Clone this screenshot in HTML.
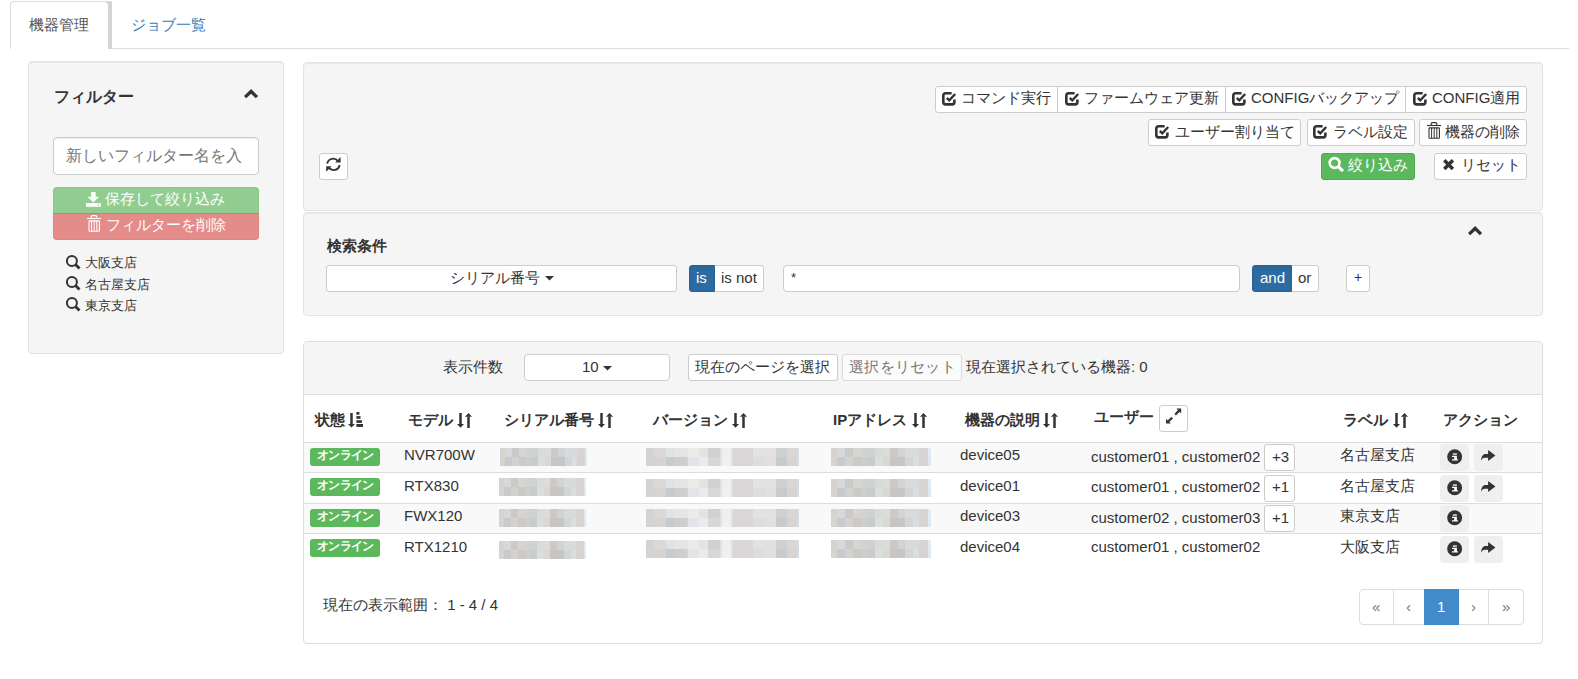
<!DOCTYPE html>
<html><head><meta charset="utf-8">
<style>
*{box-sizing:border-box}
html,body{margin:0;padding:0;background:#fff;width:1578px;height:679px;overflow:hidden}
body{font-family:"Liberation Sans",sans-serif;font-size:15px;color:#333;position:relative}
.a{position:absolute}
.t{position:absolute;white-space:nowrap;line-height:20px}
.well{position:absolute;background:#f5f5f5;border:1px solid #e3e3e3;border-radius:4px;box-shadow:inset 0 1px 1px rgba(0,0,0,.05)}
.btn{position:absolute;background:#fff;border:1px solid #ccc;border-radius:3px;white-space:nowrap;line-height:20px;color:#333}
svg{position:absolute;overflow:visible}
.bold{font-weight:bold}
</style></head><body>

<!-- tabs -->
<div class="a" style="left:112px;top:48px;width:1457px;height:1px;background:#ddd"></div>
<div class="a" style="left:10px;top:1px;width:102px;height:48px;background:#d4d4d4;border-top:1px solid #ddd;border-left:1px solid #ddd;border-top-left-radius:4px"></div><div class="a" style="left:11px;top:2px;width:97px;height:47px;background:#fff;border-radius:3px 4px 0 0"></div>
<div class="t" style="left:29px;top:15px;color:#555">機器管理</div>
<div class="t" style="left:131px;top:15px;color:#337ab7">ジョブ一覧</div>

<!-- left well -->
<div class="well" style="left:28px;top:61px;width:256px;height:293px"></div>
<div class="t bold" style="left:54px;top:87px;font-size:16px">フィルター</div>
<svg style="left:244px;top:89px" width="15" height="11"><polygon points="0,7.1 7.1,0 14.1,7.1 11.8,9.3 7.1,4.8 2.2,9.3" fill="#333"/></svg>
<div class="a" style="left:53px;top:137px;width:206px;height:38px;background:#fff;border:1px solid #ccc;border-radius:4px;box-shadow:inset 0 1px 1px rgba(0,0,0,.075)"></div>
<div class="t" style="left:66px;top:146px;font-size:16px;color:#777;width:180px;overflow:hidden">新しいフィルター名を入</div>
<div class="a" style="left:53px;top:187px;width:206px;height:26px;background:#91cd91;border:1px solid #88c888;border-bottom:0;border-radius:4px 4px 0 0"></div>
<div class="a" style="left:53px;top:213px;width:206px;height:27px;background:#e38c89;border:1px solid #df8581;border-top:0;border-radius:0 0 4px 4px"></div><div class="a" style="left:53px;top:213px;width:206px;height:1px;background:#d47c72"></div>
<svg style="left:86px;top:192px" width="15" height="15"><path d="M5.2 0 H9.6 V4.8 H13 L7.4 10.4 L1.5 4.8 H5.2 Z" fill="#fff"/><path d="M0 11.1 H14.8 V14.8 H0 Z" fill="#fff"/><rect x="11.5" y="12.3" width="1.5" height="1.2" fill="#91cd91"/></svg>
<div class="t" style="left:105px;top:189px;color:#fff">保存して絞り込み</div>
<svg style="left:87px;top:215px" width="15" height="17"><path d="M0 3.5 H14" stroke="#fff" stroke-width="1.1"/><path d="M4.2 3 V1.6 Q4.2 0.6 5.2 0.6 H8.8 Q9.8 0.6 9.8 1.6 V3.5" stroke="#fff" stroke-width="1.1" fill="none"/><rect x="2" y="5.9" width="10.4" height="10.4" rx="0.8" stroke="#fff" stroke-width="1.1" fill="none"/><path d="M4.6 6 V16 M7.2 6 V16 M9.8 6 V16" stroke="#fff" stroke-width="1"/></svg>
<div class="t" style="left:106px;top:215px;color:#fff">フィルターを削除</div>

<svg style="left:65px;top:254px" width="16" height="16"><circle cx="6.9" cy="6.9" r="5" fill="none" stroke="#333" stroke-width="2"/><path d="M10.5 10.5 L14.5 14.5" stroke="#333" stroke-width="2.8"/></svg>
<div class="t" style="left:85px;top:253px;font-size:13px">大阪支店</div>
<svg style="left:65px;top:275px" width="16" height="16"><circle cx="6.9" cy="6.9" r="5" fill="none" stroke="#333" stroke-width="2"/><path d="M10.5 10.5 L14.5 14.5" stroke="#333" stroke-width="2.8"/></svg>
<div class="t" style="left:85px;top:275px;font-size:13px">名古屋支店</div>
<svg style="left:65px;top:296px" width="16" height="16"><circle cx="6.9" cy="6.9" r="5" fill="none" stroke="#333" stroke-width="2"/><path d="M10.5 10.5 L14.5 14.5" stroke="#333" stroke-width="2.8"/></svg>
<div class="t" style="left:85px;top:296px;font-size:13px">東京支店</div>

<!-- top-right well -->
<div class="well" style="left:303px;top:62px;width:1240px;height:149px"></div>
<div class="btn" style="left:935px;top:86px;width:123px;height:27px;border-radius:3px 0 0 3px"></div>
<div class="btn" style="left:1057px;top:86px;width:169px;height:27px;border-radius:0"></div>
<div class="btn" style="left:1225px;top:86px;width:181px;height:27px;border-radius:0"></div>
<div class="btn" style="left:1405px;top:86px;width:122px;height:27px;border-radius:0 3px 3px 0"></div>
<svg style="left:942px;top:92px" width="15" height="14"><path d="M9.6 1.3 H3.6 Q1.3 1.3 1.3 3.6 V10.1 Q1.3 12.4 3.6 12.4 H10.1 Q12.4 12.4 12.4 10.1 V7.4" stroke="#333" stroke-width="2.6" fill="none"/><path d="M4.8 6 L7.3 8.3 L13.2 2" stroke="#333" stroke-width="2.4" fill="none"/></svg>
<div class="t" style="left:961px;top:88px">コマンド実行</div>
<svg style="left:1065px;top:92px" width="15" height="14"><path d="M9.6 1.3 H3.6 Q1.3 1.3 1.3 3.6 V10.1 Q1.3 12.4 3.6 12.4 H10.1 Q12.4 12.4 12.4 10.1 V7.4" stroke="#333" stroke-width="2.6" fill="none"/><path d="M4.8 6 L7.3 8.3 L13.2 2" stroke="#333" stroke-width="2.4" fill="none"/></svg>
<div class="t" style="left:1084px;top:88px">ファームウェア更新</div>
<svg style="left:1232px;top:92px" width="15" height="14"><path d="M9.6 1.3 H3.6 Q1.3 1.3 1.3 3.6 V10.1 Q1.3 12.4 3.6 12.4 H10.1 Q12.4 12.4 12.4 10.1 V7.4" stroke="#333" stroke-width="2.6" fill="none"/><path d="M4.8 6 L7.3 8.3 L13.2 2" stroke="#333" stroke-width="2.4" fill="none"/></svg>
<div class="t" style="left:1251px;top:88px">CONFIGバックアップ</div>
<svg style="left:1413px;top:92px" width="15" height="14"><path d="M9.6 1.3 H3.6 Q1.3 1.3 1.3 3.6 V10.1 Q1.3 12.4 3.6 12.4 H10.1 Q12.4 12.4 12.4 10.1 V7.4" stroke="#333" stroke-width="2.6" fill="none"/><path d="M4.8 6 L7.3 8.3 L13.2 2" stroke="#333" stroke-width="2.4" fill="none"/></svg>
<div class="t" style="left:1432px;top:88px">CONFIG適用</div>
<div class="btn" style="left:1148px;top:119px;width:153px;height:27px"></div>
<div class="btn" style="left:1307px;top:119px;width:108px;height:27px"></div>
<div class="btn" style="left:1419px;top:119px;width:108px;height:27px"></div>
<svg style="left:1155px;top:125px" width="15" height="14"><path d="M9.6 1.3 H3.6 Q1.3 1.3 1.3 3.6 V10.1 Q1.3 12.4 3.6 12.4 H10.1 Q12.4 12.4 12.4 10.1 V7.4" stroke="#333" stroke-width="2.6" fill="none"/><path d="M4.8 6 L7.3 8.3 L13.2 2" stroke="#333" stroke-width="2.4" fill="none"/></svg>
<div class="t" style="left:1175px;top:122px">ユーザー割り当て</div>
<svg style="left:1313px;top:125px" width="15" height="14"><path d="M9.6 1.3 H3.6 Q1.3 1.3 1.3 3.6 V10.1 Q1.3 12.4 3.6 12.4 H10.1 Q12.4 12.4 12.4 10.1 V7.4" stroke="#333" stroke-width="2.6" fill="none"/><path d="M4.8 6 L7.3 8.3 L13.2 2" stroke="#333" stroke-width="2.4" fill="none"/></svg>
<div class="t" style="left:1333px;top:122px">ラベル設定</div>
<svg style="left:1427px;top:122px" width="15" height="17"><path d="M0 3.5 H14" stroke="#333" stroke-width="1.1"/><path d="M4.2 3 V1.6 Q4.2 0.6 5.2 0.6 H8.8 Q9.8 0.6 9.8 1.6 V3.5" stroke="#333" stroke-width="1.1" fill="none"/><rect x="2" y="5.9" width="10.4" height="10.4" rx="0.8" stroke="#333" stroke-width="1.1" fill="none"/><path d="M4.6 6 V16 M7.2 6 V16 M9.8 6 V16" stroke="#333" stroke-width="1"/></svg>
<div class="t" style="left:1445px;top:122px">機器の削除</div>
<div class="btn" style="left:1321px;top:153px;width:94px;height:27px;background:#5cb85c;border-color:#4cae4c"></div>
<svg style="left:1328px;top:157px" width="17" height="16"><circle cx="6.6" cy="6" r="4.9" fill="none" stroke="#fff" stroke-width="2.6"/><path d="M10.3 9.6 L15 14.2" stroke="#fff" stroke-width="3.2"/></svg>
<div class="t" style="left:1348px;top:155px;color:#fff">絞り込み</div>
<div class="btn" style="left:1434px;top:153px;width:93px;height:27px"></div>
<svg style="left:1443px;top:159px" width="12" height="12"><path d="M1.3 1.3 L9.9 9.9 M9.9 1.3 L1.3 9.9" stroke="#333" stroke-width="3.5"/></svg>
<div class="t" style="left:1461px;top:155px">リセット</div>
<div class="btn" style="left:319px;top:153px;width:29px;height:27px"></div>
<svg style="left:326px;top:157px" width="15" height="15"><path d="M1.2 6.6 A6 6 0 0 1 12 4.2" fill="none" stroke="#333" stroke-width="1.9"/><path d="M14.6 0 V5.6 H9.2 Z" fill="#333"/><path d="M13.6 8 A6 6 0 0 1 2.8 10.6" fill="none" stroke="#333" stroke-width="1.9"/><path d="M0.2 14.8 V9.2 H5.6 Z" fill="#333"/></svg>
<div class="well" style="left:303px;top:212px;width:1240px;height:104px"></div>
<div class="t bold" style="left:327px;top:236px">検索条件</div>
<svg style="left:1468px;top:226px" width="15" height="11"><polygon points="0,7.1 7.1,0 14.1,7.1 11.8,9.3 7.1,4.8 2.2,9.3" fill="#333"/></svg>
<div class="btn" style="left:326px;top:265px;width:351px;height:27px"></div>
<div class="t" style="left:450px;top:268px">シリアル番号</div>
<svg style="left:545px;top:276px" width="9" height="5"><path d="M0 0 H9 L4.5 4.5 Z" fill="#333"/></svg>
<div class="btn" style="left:689px;top:265px;width:26px;height:27px;background:#2d6ca2;border-color:#28619a;border-radius:3px 0 0 3px;box-shadow:inset 0 2px 4px rgba(0,0,0,.08)"></div>
<div class="t" style="left:696px;top:268px;color:#fff">is</div>
<div class="btn" style="left:715px;top:265px;width:49px;height:27px;border-radius:0 3px 3px 0;border-left:0"></div>
<div class="t" style="left:721px;top:268px">is not</div>
<div class="btn" style="left:783px;top:265px;width:457px;height:27px;border-radius:4px"></div>
<div class="t" style="left:791px;top:268px;font-size:13px">*</div>
<div class="btn" style="left:1252px;top:265px;width:40px;height:27px;background:#2d6ca2;border-color:#28619a;border-radius:3px 0 0 3px;box-shadow:inset 0 2px 4px rgba(0,0,0,.08)"></div>
<div class="t" style="left:1260px;top:268px;color:#fff">and</div>
<div class="btn" style="left:1292px;top:265px;width:27px;height:27px;border-radius:0 3px 3px 0;border-left:0"></div>
<div class="t" style="left:1298px;top:268px">or</div>
<div class="btn" style="left:1346px;top:265px;width:24px;height:27px"></div>
<div class="t" style="left:1354px;top:267px;font-size:14px">+</div>
<div class="a" style="left:303px;top:341px;width:1240px;height:303px;background:#fff;border:1px solid #ddd;border-radius:4px;overflow:hidden"><div style="position:absolute;left:0;top:0;width:100%;height:53px;background:#f5f5f5;border-bottom:1px solid #ddd"></div></div>
<div class="t" style="left:443px;top:357px">表示件数</div>
<div class="btn" style="left:524px;top:354px;width:146px;height:27px;border-radius:4px"></div>
<div class="t" style="left:582px;top:357px">10</div>
<svg style="left:603px;top:366px" width="9" height="5"><path d="M0 0 H9 L4.5 4.5 Z" fill="#333"/></svg>
<div class="btn" style="left:688px;top:354px;width:150px;height:27px"></div>
<div class="t" style="left:695px;top:357px">現在のページを選択</div>
<div class="btn" style="left:842px;top:354px;width:120px;height:27px;opacity:.65"></div>
<div class="t" style="left:849px;top:357px;color:#777;letter-spacing:0.3px">選択をリセット</div>
<div class="t" style="left:966px;top:357px">現在選択されている機器: 0</div>
<div class="t bold" style="left:315px;top:410px">状態</div>
<svg style="left:348px;top:412px" width="16" height="16"><path d="M3.5 1 V12.5" stroke="#333" stroke-width="2.5"/><path d="M0 12 H7 L3.5 15.5 Z" fill="#333"/><rect x="8.4" y="0" width="3" height="2.7" fill="#333"/><rect x="8.4" y="4.1" width="4.1" height="2.7" fill="#333"/><rect x="8.4" y="8.2" width="5.5" height="2.7" fill="#333"/><rect x="8.4" y="12" width="6.6" height="2.9" fill="#333"/></svg>
<div class="t bold" style="left:408px;top:410px">モデル</div>
<svg style="left:457px;top:413px" width="16" height="16"><path d="M3.5 0 V11.5" stroke="#333" stroke-width="2.5"/><path d="M0 11 H7 L3.5 14.8 Z" fill="#333"/><path d="M11.5 15 V3.5" stroke="#333" stroke-width="2.5"/><path d="M8 3.8 H15 L11.5 0 Z" fill="#333"/></svg>
<div class="t bold" style="left:504px;top:410px">シリアル番号</div>
<svg style="left:598px;top:413px" width="16" height="16"><path d="M3.5 0 V11.5" stroke="#333" stroke-width="2.5"/><path d="M0 11 H7 L3.5 14.8 Z" fill="#333"/><path d="M11.5 15 V3.5" stroke="#333" stroke-width="2.5"/><path d="M8 3.8 H15 L11.5 0 Z" fill="#333"/></svg>
<div class="t bold" style="left:653px;top:410px">バージョン</div>
<svg style="left:732px;top:413px" width="16" height="16"><path d="M3.5 0 V11.5" stroke="#333" stroke-width="2.5"/><path d="M0 11 H7 L3.5 14.8 Z" fill="#333"/><path d="M11.5 15 V3.5" stroke="#333" stroke-width="2.5"/><path d="M8 3.8 H15 L11.5 0 Z" fill="#333"/></svg>
<div class="t bold" style="left:833px;top:410px">IPアドレス</div>
<svg style="left:912px;top:413px" width="16" height="16"><path d="M3.5 0 V11.5" stroke="#333" stroke-width="2.5"/><path d="M0 11 H7 L3.5 14.8 Z" fill="#333"/><path d="M11.5 15 V3.5" stroke="#333" stroke-width="2.5"/><path d="M8 3.8 H15 L11.5 0 Z" fill="#333"/></svg>
<div class="t bold" style="left:965px;top:410px">機器の説明</div>
<svg style="left:1043px;top:413px" width="16" height="16"><path d="M3.5 0 V11.5" stroke="#333" stroke-width="2.5"/><path d="M0 11 H7 L3.5 14.8 Z" fill="#333"/><path d="M11.5 15 V3.5" stroke="#333" stroke-width="2.5"/><path d="M8 3.8 H15 L11.5 0 Z" fill="#333"/></svg>
<div class="t bold" style="left:1343px;top:410px">ラベル</div>
<svg style="left:1393px;top:413px" width="16" height="16"><path d="M3.5 0 V11.5" stroke="#333" stroke-width="2.5"/><path d="M0 11 H7 L3.5 14.8 Z" fill="#333"/><path d="M11.5 15 V3.5" stroke="#333" stroke-width="2.5"/><path d="M8 3.8 H15 L11.5 0 Z" fill="#333"/></svg>
<div class="t bold" style="left:1443px;top:410px">アクション</div>
<div class="t bold" style="left:1094px;top:407px">ユーザー</div>
<div class="btn" style="left:1159px;top:405px;width:29px;height:27px"></div>
<svg style="left:1165px;top:408px" width="17" height="17"><path d="M10.2 6.6 L14.4 2.4" stroke="#333" stroke-width="2.2"/><path d="M16.2 0.6 V5.4 L11.4 0.6 Z" fill="#333"/><path d="M7.2 9.6 L3 13.8" stroke="#333" stroke-width="2.2"/><path d="M1 15.6 V10.8 L5.8 15.6 Z" fill="#333"/></svg>
<div class="a" style="left:304px;top:442px;width:1238px;height:1px;background:#ddd"></div>
<div class="a" style="left:304px;top:443px;width:1238px;height:29px;background:#f9f9f9"></div>
<div class="a" style="left:304px;top:472px;width:1238px;height:1px;background:#ddd"></div>
<div class="a" style="left:304px;top:473px;width:1238px;height:30px;background:#fff"></div>
<div class="a" style="left:304px;top:503px;width:1238px;height:1px;background:#ddd"></div>
<div class="a" style="left:304px;top:504px;width:1238px;height:29px;background:#f9f9f9"></div>
<div class="a" style="left:304px;top:533px;width:1238px;height:1px;background:#ddd"></div>
<div class="a" style="left:304px;top:534px;width:1238px;height:30px;background:#fff"></div>
<div class="a" style="left:310px;top:448px;width:70px;height:18px;background:#5cb85c;border-radius:3px"></div>
<div class="t bold" style="left:317px;top:445px;font-size:12px;letter-spacing:-0.7px;color:#fff">オンライン</div>
<div class="t" style="left:404px;top:445px">NVR700W</div>
<svg style="left:500px;top:448px" width="87" height="18" shape-rendering="crispEdges"><rect x="0.00" y="0" width="5.36" height="8.5" fill="#d6d3ce"/><rect x="0.00" y="8.5" width="5.36" height="9.5" fill="#d5d4ce"/><rect x="5.31" y="0" width="6.93" height="8.5" fill="#d5d9da"/><rect x="5.31" y="8.5" width="6.93" height="9.5" fill="#c9cacb"/><rect x="12.19" y="0" width="7.19" height="8.5" fill="#c9cacc"/><rect x="12.19" y="8.5" width="7.19" height="9.5" fill="#d4d2ce"/><rect x="19.33" y="0" width="6.67" height="8.5" fill="#d8d4d2"/><rect x="19.33" y="8.5" width="6.67" height="9.5" fill="#cdc9c7"/><rect x="25.95" y="0" width="5.54" height="8.5" fill="#d0d3d3"/><rect x="25.95" y="8.5" width="5.54" height="9.5" fill="#cccfce"/><rect x="31.44" y="0" width="7.02" height="8.5" fill="#cfd1d3"/><rect x="31.44" y="8.5" width="7.02" height="9.5" fill="#cbcbce"/><rect x="38.41" y="0" width="6.76" height="8.5" fill="#d8dbdb"/><rect x="38.41" y="8.5" width="6.76" height="9.5" fill="#dcdedd"/><rect x="45.11" y="0" width="6.41" height="8.5" fill="#dcdcd8"/><rect x="45.11" y="8.5" width="6.41" height="9.5" fill="#d8d8d6"/><rect x="51.47" y="0" width="6.76" height="8.5" fill="#cec9c8"/><rect x="51.47" y="8.5" width="6.76" height="9.5" fill="#c9c5c2"/><rect x="58.17" y="0" width="6.41" height="8.5" fill="#d2d3d6"/><rect x="58.17" y="8.5" width="6.41" height="9.5" fill="#c4c6ca"/><rect x="64.53" y="0" width="7.02" height="8.5" fill="#d9dbda"/><rect x="64.53" y="8.5" width="7.02" height="9.5" fill="#d4d6d5"/><rect x="71.50" y="0" width="5.19" height="8.5" fill="#d9dbda"/><rect x="71.50" y="8.5" width="5.19" height="9.5" fill="#dcdde0"/><rect x="76.64" y="0" width="7.97" height="8.5" fill="#d9d4d3"/><rect x="76.64" y="8.5" width="7.97" height="9.5" fill="#d7d3d1"/><rect x="84.56" y="0" width="2.49" height="8.5" fill="#e4eaf3"/><rect x="84.56" y="8.5" width="2.49" height="9.5" fill="#dde9f0"/></svg>
<svg style="left:646px;top:448px" width="153" height="18" shape-rendering="crispEdges"><rect x="0" y="0" width="8" height="8.5" fill="#d4d3d1"/><rect x="8" y="0" width="12" height="8.5" fill="#dad8d8"/><rect x="20" y="0" width="9" height="8.5" fill="#e0e2e4"/><rect x="29" y="0" width="13" height="8.5" fill="#e5e5e3"/><rect x="42" y="0" width="11" height="8.5" fill="#ebebea"/><rect x="53" y="0" width="9" height="8.5" fill="#e4e2e2"/><rect x="62" y="0" width="12" height="8.5" fill="#d0d1d3"/><rect x="74" y="0" width="2" height="8.5" fill="#e0e2e3"/><rect x="76" y="0" width="9" height="8.5" fill="#eef0ef"/><rect x="85" y="0" width="2" height="8.5" fill="#e0e0e0"/><rect x="87" y="0" width="20" height="8.5" fill="#dad8d6"/><rect x="107" y="0" width="12" height="8.5" fill="#e1e2e3"/><rect x="119" y="0" width="11" height="8.5" fill="#e2e1df"/><rect x="130" y="0" width="11" height="8.5" fill="#cdd1d2"/><rect x="141" y="0" width="10" height="8.5" fill="#d9d6d4"/><rect x="151" y="0" width="2" height="8.5" fill="#d8dbe0"/><rect x="0" y="8.5" width="8" height="9.5" fill="#d3d3d1"/><rect x="8" y="8.5" width="12" height="9.5" fill="#d7d3d1"/><rect x="20" y="8.5" width="9" height="9.5" fill="#c8cacd"/><rect x="29" y="8.5" width="11" height="9.5" fill="#cecfca"/><rect x="40" y="8.5" width="2" height="9.5" fill="#d3d3d3"/><rect x="42" y="8.5" width="11" height="9.5" fill="#e1e4e8"/><rect x="53" y="8.5" width="9" height="9.5" fill="#ecebec"/><rect x="62" y="8.5" width="12" height="9.5" fill="#d6d7d8"/><rect x="74" y="8.5" width="2" height="9.5" fill="#e0e2e3"/><rect x="76" y="8.5" width="9" height="9.5" fill="#eff1f0"/><rect x="85" y="8.5" width="2" height="9.5" fill="#e0e0e0"/><rect x="87" y="8.5" width="20" height="9.5" fill="#d8d6d6"/><rect x="107" y="8.5" width="12" height="9.5" fill="#dcdddf"/><rect x="119" y="8.5" width="11" height="9.5" fill="#dfe0df"/><rect x="130" y="8.5" width="11" height="9.5" fill="#c9cacc"/><rect x="141" y="8.5" width="10" height="9.5" fill="#d6d3d0"/><rect x="151" y="8.5" width="2" height="9.5" fill="#d8dbe0"/></svg>
<svg style="left:831px;top:448px" width="100" height="18" shape-rendering="crispEdges"><rect x="0.00" y="0" width="6.16" height="8.5" fill="#d6d3ce"/><rect x="0.00" y="8.5" width="6.16" height="9.5" fill="#d5d4ce"/><rect x="6.11" y="0" width="7.96" height="8.5" fill="#d5d9da"/><rect x="6.11" y="8.5" width="7.96" height="9.5" fill="#c9cacb"/><rect x="14.01" y="0" width="8.26" height="8.5" fill="#c9cacc"/><rect x="14.01" y="8.5" width="8.26" height="9.5" fill="#d4d2ce"/><rect x="22.22" y="0" width="7.66" height="8.5" fill="#d8d4d2"/><rect x="22.22" y="8.5" width="7.66" height="9.5" fill="#cdc9c7"/><rect x="29.83" y="0" width="6.36" height="8.5" fill="#d0d3d3"/><rect x="29.83" y="8.5" width="6.36" height="9.5" fill="#cccfce"/><rect x="36.14" y="0" width="8.06" height="8.5" fill="#cfd1d3"/><rect x="36.14" y="8.5" width="8.06" height="9.5" fill="#cbcbce"/><rect x="44.14" y="0" width="7.76" height="8.5" fill="#d8dbdb"/><rect x="44.14" y="8.5" width="7.76" height="9.5" fill="#dcdedd"/><rect x="51.85" y="0" width="7.36" height="8.5" fill="#dcdcd8"/><rect x="51.85" y="8.5" width="7.36" height="9.5" fill="#d8d8d6"/><rect x="59.16" y="0" width="7.76" height="8.5" fill="#cec9c8"/><rect x="59.16" y="8.5" width="7.76" height="9.5" fill="#c9c5c2"/><rect x="66.87" y="0" width="7.36" height="8.5" fill="#d2d3d6"/><rect x="66.87" y="8.5" width="7.36" height="9.5" fill="#c4c6ca"/><rect x="74.17" y="0" width="8.06" height="8.5" fill="#d9dbda"/><rect x="74.17" y="8.5" width="8.06" height="9.5" fill="#d4d6d5"/><rect x="82.18" y="0" width="5.96" height="8.5" fill="#d9dbda"/><rect x="82.18" y="8.5" width="5.96" height="9.5" fill="#dcdde0"/><rect x="88.09" y="0" width="9.16" height="8.5" fill="#d9d4d3"/><rect x="88.09" y="8.5" width="9.16" height="9.5" fill="#d7d3d1"/><rect x="97.20" y="0" width="2.85" height="8.5" fill="#e4eaf3"/><rect x="97.20" y="8.5" width="2.85" height="9.5" fill="#dde9f0"/></svg>
<div class="t" style="left:960px;top:445px">device05</div>
<div class="t" style="left:1091px;top:447px">customer01 , customer02</div>
<div class="btn" style="left:1264px;top:444px;width:31px;height:27px"></div>
<div class="t" style="left:1272px;top:447px">+3</div>
<div class="t" style="left:1340px;top:445px">名古屋支店</div>
<div class="a" style="left:1440px;top:444px;width:29px;height:27px;background:#efefef;border-radius:4px"></div>
<svg style="left:1447px;top:448.5px" width="16" height="16"><circle cx="7.65" cy="7.75" r="7.45" fill="#333"/><rect x="5.9" y="4.4" width="4" height="1.3" fill="#fff"/><path d="M5 6.7 H9.9 V10.2 H10.9 V11.4 H5 V10.2 H7.2 V7.9 H5 Z" fill="#fff"/></svg>
<div class="a" style="left:1474px;top:444px;width:29px;height:27px;background:#efefef;border-radius:4px"></div>
<svg style="left:1480px;top:450px" width="16" height="12"><path d="M0.9 10.7 C1.8 8.8 3 7.8 5 7.8 H8.1 V10.9 L15.4 5.6 L8.1 0.1 V4 H5.5 C3 4 1.3 6.5 0.9 10.7 Z" fill="#333"/></svg>
<div class="a" style="left:310px;top:478px;width:70px;height:18px;background:#5cb85c;border-radius:3px"></div>
<div class="t bold" style="left:317px;top:475px;font-size:12px;letter-spacing:-0.7px;color:#fff">オンライン</div>
<div class="t" style="left:404px;top:476px">RTX830</div>
<svg style="left:499px;top:478px" width="87" height="18" shape-rendering="crispEdges"><rect x="0.00" y="0" width="5.36" height="8.5" fill="#d6d3ce"/><rect x="0.00" y="8.5" width="5.36" height="9.5" fill="#d5d4ce"/><rect x="5.31" y="0" width="6.93" height="8.5" fill="#d5d9da"/><rect x="5.31" y="8.5" width="6.93" height="9.5" fill="#c9cacb"/><rect x="12.19" y="0" width="7.19" height="8.5" fill="#c9cacc"/><rect x="12.19" y="8.5" width="7.19" height="9.5" fill="#d4d2ce"/><rect x="19.33" y="0" width="6.67" height="8.5" fill="#d8d4d2"/><rect x="19.33" y="8.5" width="6.67" height="9.5" fill="#cdc9c7"/><rect x="25.95" y="0" width="5.54" height="8.5" fill="#d0d3d3"/><rect x="25.95" y="8.5" width="5.54" height="9.5" fill="#cccfce"/><rect x="31.44" y="0" width="7.02" height="8.5" fill="#cfd1d3"/><rect x="31.44" y="8.5" width="7.02" height="9.5" fill="#cbcbce"/><rect x="38.41" y="0" width="6.76" height="8.5" fill="#d8dbdb"/><rect x="38.41" y="8.5" width="6.76" height="9.5" fill="#dcdedd"/><rect x="45.11" y="0" width="6.41" height="8.5" fill="#dcdcd8"/><rect x="45.11" y="8.5" width="6.41" height="9.5" fill="#d8d8d6"/><rect x="51.47" y="0" width="6.76" height="8.5" fill="#cec9c8"/><rect x="51.47" y="8.5" width="6.76" height="9.5" fill="#c9c5c2"/><rect x="58.17" y="0" width="6.41" height="8.5" fill="#d2d3d6"/><rect x="58.17" y="8.5" width="6.41" height="9.5" fill="#c4c6ca"/><rect x="64.53" y="0" width="7.02" height="8.5" fill="#d9dbda"/><rect x="64.53" y="8.5" width="7.02" height="9.5" fill="#d4d6d5"/><rect x="71.50" y="0" width="5.19" height="8.5" fill="#d9dbda"/><rect x="71.50" y="8.5" width="5.19" height="9.5" fill="#dcdde0"/><rect x="76.64" y="0" width="7.97" height="8.5" fill="#d9d4d3"/><rect x="76.64" y="8.5" width="7.97" height="9.5" fill="#d7d3d1"/><rect x="84.56" y="0" width="2.49" height="8.5" fill="#e4eaf3"/><rect x="84.56" y="8.5" width="2.49" height="9.5" fill="#dde9f0"/></svg>
<svg style="left:646px;top:479px" width="153" height="18" shape-rendering="crispEdges"><rect x="0" y="0" width="8" height="8.5" fill="#d4d3d1"/><rect x="8" y="0" width="12" height="8.5" fill="#dad8d8"/><rect x="20" y="0" width="9" height="8.5" fill="#e0e2e4"/><rect x="29" y="0" width="13" height="8.5" fill="#e5e5e3"/><rect x="42" y="0" width="11" height="8.5" fill="#ebebea"/><rect x="53" y="0" width="9" height="8.5" fill="#e4e2e2"/><rect x="62" y="0" width="12" height="8.5" fill="#d0d1d3"/><rect x="74" y="0" width="2" height="8.5" fill="#e0e2e3"/><rect x="76" y="0" width="9" height="8.5" fill="#eef0ef"/><rect x="85" y="0" width="2" height="8.5" fill="#e0e0e0"/><rect x="87" y="0" width="20" height="8.5" fill="#dad8d6"/><rect x="107" y="0" width="12" height="8.5" fill="#e1e2e3"/><rect x="119" y="0" width="11" height="8.5" fill="#e2e1df"/><rect x="130" y="0" width="11" height="8.5" fill="#cdd1d2"/><rect x="141" y="0" width="10" height="8.5" fill="#d9d6d4"/><rect x="151" y="0" width="2" height="8.5" fill="#d8dbe0"/><rect x="0" y="8.5" width="8" height="9.5" fill="#d3d3d1"/><rect x="8" y="8.5" width="12" height="9.5" fill="#d7d3d1"/><rect x="20" y="8.5" width="9" height="9.5" fill="#c8cacd"/><rect x="29" y="8.5" width="11" height="9.5" fill="#cecfca"/><rect x="40" y="8.5" width="2" height="9.5" fill="#d3d3d3"/><rect x="42" y="8.5" width="11" height="9.5" fill="#e1e4e8"/><rect x="53" y="8.5" width="9" height="9.5" fill="#ecebec"/><rect x="62" y="8.5" width="12" height="9.5" fill="#d6d7d8"/><rect x="74" y="8.5" width="2" height="9.5" fill="#e0e2e3"/><rect x="76" y="8.5" width="9" height="9.5" fill="#eff1f0"/><rect x="85" y="8.5" width="2" height="9.5" fill="#e0e0e0"/><rect x="87" y="8.5" width="20" height="9.5" fill="#d8d6d6"/><rect x="107" y="8.5" width="12" height="9.5" fill="#dcdddf"/><rect x="119" y="8.5" width="11" height="9.5" fill="#dfe0df"/><rect x="130" y="8.5" width="11" height="9.5" fill="#c9cacc"/><rect x="141" y="8.5" width="10" height="9.5" fill="#d6d3d0"/><rect x="151" y="8.5" width="2" height="9.5" fill="#d8dbe0"/></svg>
<svg style="left:831px;top:479px" width="100" height="18" shape-rendering="crispEdges"><rect x="0.00" y="0" width="6.16" height="8.5" fill="#d6d3ce"/><rect x="0.00" y="8.5" width="6.16" height="9.5" fill="#d5d4ce"/><rect x="6.11" y="0" width="7.96" height="8.5" fill="#d5d9da"/><rect x="6.11" y="8.5" width="7.96" height="9.5" fill="#c9cacb"/><rect x="14.01" y="0" width="8.26" height="8.5" fill="#c9cacc"/><rect x="14.01" y="8.5" width="8.26" height="9.5" fill="#d4d2ce"/><rect x="22.22" y="0" width="7.66" height="8.5" fill="#d8d4d2"/><rect x="22.22" y="8.5" width="7.66" height="9.5" fill="#cdc9c7"/><rect x="29.83" y="0" width="6.36" height="8.5" fill="#d0d3d3"/><rect x="29.83" y="8.5" width="6.36" height="9.5" fill="#cccfce"/><rect x="36.14" y="0" width="8.06" height="8.5" fill="#cfd1d3"/><rect x="36.14" y="8.5" width="8.06" height="9.5" fill="#cbcbce"/><rect x="44.14" y="0" width="7.76" height="8.5" fill="#d8dbdb"/><rect x="44.14" y="8.5" width="7.76" height="9.5" fill="#dcdedd"/><rect x="51.85" y="0" width="7.36" height="8.5" fill="#dcdcd8"/><rect x="51.85" y="8.5" width="7.36" height="9.5" fill="#d8d8d6"/><rect x="59.16" y="0" width="7.76" height="8.5" fill="#cec9c8"/><rect x="59.16" y="8.5" width="7.76" height="9.5" fill="#c9c5c2"/><rect x="66.87" y="0" width="7.36" height="8.5" fill="#d2d3d6"/><rect x="66.87" y="8.5" width="7.36" height="9.5" fill="#c4c6ca"/><rect x="74.17" y="0" width="8.06" height="8.5" fill="#d9dbda"/><rect x="74.17" y="8.5" width="8.06" height="9.5" fill="#d4d6d5"/><rect x="82.18" y="0" width="5.96" height="8.5" fill="#d9dbda"/><rect x="82.18" y="8.5" width="5.96" height="9.5" fill="#dcdde0"/><rect x="88.09" y="0" width="9.16" height="8.5" fill="#d9d4d3"/><rect x="88.09" y="8.5" width="9.16" height="9.5" fill="#d7d3d1"/><rect x="97.20" y="0" width="2.85" height="8.5" fill="#e4eaf3"/><rect x="97.20" y="8.5" width="2.85" height="9.5" fill="#dde9f0"/></svg>
<div class="t" style="left:960px;top:476px">device01</div>
<div class="t" style="left:1091px;top:477px">customer01 , customer02</div>
<div class="btn" style="left:1264px;top:475px;width:31px;height:27px"></div>
<div class="t" style="left:1272px;top:477px">+1</div>
<div class="t" style="left:1340px;top:476px">名古屋支店</div>
<div class="a" style="left:1440px;top:475px;width:29px;height:27px;background:#efefef;border-radius:4px"></div>
<svg style="left:1447px;top:479.5px" width="16" height="16"><circle cx="7.65" cy="7.75" r="7.45" fill="#333"/><rect x="5.9" y="4.4" width="4" height="1.3" fill="#fff"/><path d="M5 6.7 H9.9 V10.2 H10.9 V11.4 H5 V10.2 H7.2 V7.9 H5 Z" fill="#fff"/></svg>
<div class="a" style="left:1474px;top:475px;width:29px;height:27px;background:#efefef;border-radius:4px"></div>
<svg style="left:1480px;top:481px" width="16" height="12"><path d="M0.9 10.7 C1.8 8.8 3 7.8 5 7.8 H8.1 V10.9 L15.4 5.6 L8.1 0.1 V4 H5.5 C3 4 1.3 6.5 0.9 10.7 Z" fill="#333"/></svg>
<div class="a" style="left:310px;top:509px;width:70px;height:18px;background:#5cb85c;border-radius:3px"></div>
<div class="t bold" style="left:317px;top:506px;font-size:12px;letter-spacing:-0.7px;color:#fff">オンライン</div>
<div class="t" style="left:404px;top:506px">FWX120</div>
<svg style="left:499px;top:509px" width="87" height="18" shape-rendering="crispEdges"><rect x="0.00" y="0" width="5.36" height="8.5" fill="#d6d3ce"/><rect x="0.00" y="8.5" width="5.36" height="9.5" fill="#d5d4ce"/><rect x="5.31" y="0" width="6.93" height="8.5" fill="#d5d9da"/><rect x="5.31" y="8.5" width="6.93" height="9.5" fill="#c9cacb"/><rect x="12.19" y="0" width="7.19" height="8.5" fill="#c9cacc"/><rect x="12.19" y="8.5" width="7.19" height="9.5" fill="#d4d2ce"/><rect x="19.33" y="0" width="6.67" height="8.5" fill="#d8d4d2"/><rect x="19.33" y="8.5" width="6.67" height="9.5" fill="#cdc9c7"/><rect x="25.95" y="0" width="5.54" height="8.5" fill="#d0d3d3"/><rect x="25.95" y="8.5" width="5.54" height="9.5" fill="#cccfce"/><rect x="31.44" y="0" width="7.02" height="8.5" fill="#cfd1d3"/><rect x="31.44" y="8.5" width="7.02" height="9.5" fill="#cbcbce"/><rect x="38.41" y="0" width="6.76" height="8.5" fill="#d8dbdb"/><rect x="38.41" y="8.5" width="6.76" height="9.5" fill="#dcdedd"/><rect x="45.11" y="0" width="6.41" height="8.5" fill="#dcdcd8"/><rect x="45.11" y="8.5" width="6.41" height="9.5" fill="#d8d8d6"/><rect x="51.47" y="0" width="6.76" height="8.5" fill="#cec9c8"/><rect x="51.47" y="8.5" width="6.76" height="9.5" fill="#c9c5c2"/><rect x="58.17" y="0" width="6.41" height="8.5" fill="#d2d3d6"/><rect x="58.17" y="8.5" width="6.41" height="9.5" fill="#c4c6ca"/><rect x="64.53" y="0" width="7.02" height="8.5" fill="#d9dbda"/><rect x="64.53" y="8.5" width="7.02" height="9.5" fill="#d4d6d5"/><rect x="71.50" y="0" width="5.19" height="8.5" fill="#d9dbda"/><rect x="71.50" y="8.5" width="5.19" height="9.5" fill="#dcdde0"/><rect x="76.64" y="0" width="7.97" height="8.5" fill="#d9d4d3"/><rect x="76.64" y="8.5" width="7.97" height="9.5" fill="#d7d3d1"/><rect x="84.56" y="0" width="2.49" height="8.5" fill="#e4eaf3"/><rect x="84.56" y="8.5" width="2.49" height="9.5" fill="#dde9f0"/></svg>
<svg style="left:646px;top:509px" width="153" height="18" shape-rendering="crispEdges"><rect x="0" y="0" width="8" height="8.5" fill="#d4d3d1"/><rect x="8" y="0" width="12" height="8.5" fill="#dad8d8"/><rect x="20" y="0" width="9" height="8.5" fill="#e0e2e4"/><rect x="29" y="0" width="13" height="8.5" fill="#e5e5e3"/><rect x="42" y="0" width="11" height="8.5" fill="#ebebea"/><rect x="53" y="0" width="9" height="8.5" fill="#e4e2e2"/><rect x="62" y="0" width="12" height="8.5" fill="#d0d1d3"/><rect x="74" y="0" width="2" height="8.5" fill="#e0e2e3"/><rect x="76" y="0" width="9" height="8.5" fill="#eef0ef"/><rect x="85" y="0" width="2" height="8.5" fill="#e0e0e0"/><rect x="87" y="0" width="20" height="8.5" fill="#dad8d6"/><rect x="107" y="0" width="12" height="8.5" fill="#e1e2e3"/><rect x="119" y="0" width="11" height="8.5" fill="#e2e1df"/><rect x="130" y="0" width="11" height="8.5" fill="#cdd1d2"/><rect x="141" y="0" width="10" height="8.5" fill="#d9d6d4"/><rect x="151" y="0" width="2" height="8.5" fill="#d8dbe0"/><rect x="0" y="8.5" width="8" height="9.5" fill="#d3d3d1"/><rect x="8" y="8.5" width="12" height="9.5" fill="#d7d3d1"/><rect x="20" y="8.5" width="9" height="9.5" fill="#c8cacd"/><rect x="29" y="8.5" width="11" height="9.5" fill="#cecfca"/><rect x="40" y="8.5" width="2" height="9.5" fill="#d3d3d3"/><rect x="42" y="8.5" width="11" height="9.5" fill="#e1e4e8"/><rect x="53" y="8.5" width="9" height="9.5" fill="#ecebec"/><rect x="62" y="8.5" width="12" height="9.5" fill="#d6d7d8"/><rect x="74" y="8.5" width="2" height="9.5" fill="#e0e2e3"/><rect x="76" y="8.5" width="9" height="9.5" fill="#eff1f0"/><rect x="85" y="8.5" width="2" height="9.5" fill="#e0e0e0"/><rect x="87" y="8.5" width="20" height="9.5" fill="#d8d6d6"/><rect x="107" y="8.5" width="12" height="9.5" fill="#dcdddf"/><rect x="119" y="8.5" width="11" height="9.5" fill="#dfe0df"/><rect x="130" y="8.5" width="11" height="9.5" fill="#c9cacc"/><rect x="141" y="8.5" width="10" height="9.5" fill="#d6d3d0"/><rect x="151" y="8.5" width="2" height="9.5" fill="#d8dbe0"/></svg>
<svg style="left:831px;top:509px" width="100" height="18" shape-rendering="crispEdges"><rect x="0.00" y="0" width="6.16" height="8.5" fill="#d6d3ce"/><rect x="0.00" y="8.5" width="6.16" height="9.5" fill="#d5d4ce"/><rect x="6.11" y="0" width="7.96" height="8.5" fill="#d5d9da"/><rect x="6.11" y="8.5" width="7.96" height="9.5" fill="#c9cacb"/><rect x="14.01" y="0" width="8.26" height="8.5" fill="#c9cacc"/><rect x="14.01" y="8.5" width="8.26" height="9.5" fill="#d4d2ce"/><rect x="22.22" y="0" width="7.66" height="8.5" fill="#d8d4d2"/><rect x="22.22" y="8.5" width="7.66" height="9.5" fill="#cdc9c7"/><rect x="29.83" y="0" width="6.36" height="8.5" fill="#d0d3d3"/><rect x="29.83" y="8.5" width="6.36" height="9.5" fill="#cccfce"/><rect x="36.14" y="0" width="8.06" height="8.5" fill="#cfd1d3"/><rect x="36.14" y="8.5" width="8.06" height="9.5" fill="#cbcbce"/><rect x="44.14" y="0" width="7.76" height="8.5" fill="#d8dbdb"/><rect x="44.14" y="8.5" width="7.76" height="9.5" fill="#dcdedd"/><rect x="51.85" y="0" width="7.36" height="8.5" fill="#dcdcd8"/><rect x="51.85" y="8.5" width="7.36" height="9.5" fill="#d8d8d6"/><rect x="59.16" y="0" width="7.76" height="8.5" fill="#cec9c8"/><rect x="59.16" y="8.5" width="7.76" height="9.5" fill="#c9c5c2"/><rect x="66.87" y="0" width="7.36" height="8.5" fill="#d2d3d6"/><rect x="66.87" y="8.5" width="7.36" height="9.5" fill="#c4c6ca"/><rect x="74.17" y="0" width="8.06" height="8.5" fill="#d9dbda"/><rect x="74.17" y="8.5" width="8.06" height="9.5" fill="#d4d6d5"/><rect x="82.18" y="0" width="5.96" height="8.5" fill="#d9dbda"/><rect x="82.18" y="8.5" width="5.96" height="9.5" fill="#dcdde0"/><rect x="88.09" y="0" width="9.16" height="8.5" fill="#d9d4d3"/><rect x="88.09" y="8.5" width="9.16" height="9.5" fill="#d7d3d1"/><rect x="97.20" y="0" width="2.85" height="8.5" fill="#e4eaf3"/><rect x="97.20" y="8.5" width="2.85" height="9.5" fill="#dde9f0"/></svg>
<div class="t" style="left:960px;top:506px">device03</div>
<div class="t" style="left:1091px;top:508px">customer02 , customer03</div>
<div class="btn" style="left:1264px;top:505px;width:31px;height:27px"></div>
<div class="t" style="left:1272px;top:508px">+1</div>
<div class="t" style="left:1340px;top:506px">東京支店</div>
<div class="a" style="left:1440px;top:505px;width:29px;height:27px;background:#efefef;border-radius:4px"></div>
<svg style="left:1447px;top:509.5px" width="16" height="16"><circle cx="7.65" cy="7.75" r="7.45" fill="#333"/><rect x="5.9" y="4.4" width="4" height="1.3" fill="#fff"/><path d="M5 6.7 H9.9 V10.2 H10.9 V11.4 H5 V10.2 H7.2 V7.9 H5 Z" fill="#fff"/></svg>
<div class="a" style="left:310px;top:539px;width:70px;height:18px;background:#5cb85c;border-radius:3px"></div>
<div class="t bold" style="left:317px;top:536px;font-size:12px;letter-spacing:-0.7px;color:#fff">オンライン</div>
<div class="t" style="left:404px;top:537px">RTX1210</div>
<svg style="left:499px;top:541px" width="87" height="18" shape-rendering="crispEdges"><rect x="0.00" y="0" width="5.36" height="8.5" fill="#d6d3ce"/><rect x="0.00" y="8.5" width="5.36" height="9.5" fill="#d5d4ce"/><rect x="5.31" y="0" width="6.93" height="8.5" fill="#d5d9da"/><rect x="5.31" y="8.5" width="6.93" height="9.5" fill="#c9cacb"/><rect x="12.19" y="0" width="7.19" height="8.5" fill="#c9cacc"/><rect x="12.19" y="8.5" width="7.19" height="9.5" fill="#d4d2ce"/><rect x="19.33" y="0" width="6.67" height="8.5" fill="#d8d4d2"/><rect x="19.33" y="8.5" width="6.67" height="9.5" fill="#cdc9c7"/><rect x="25.95" y="0" width="5.54" height="8.5" fill="#d0d3d3"/><rect x="25.95" y="8.5" width="5.54" height="9.5" fill="#cccfce"/><rect x="31.44" y="0" width="7.02" height="8.5" fill="#cfd1d3"/><rect x="31.44" y="8.5" width="7.02" height="9.5" fill="#cbcbce"/><rect x="38.41" y="0" width="6.76" height="8.5" fill="#d8dbdb"/><rect x="38.41" y="8.5" width="6.76" height="9.5" fill="#dcdedd"/><rect x="45.11" y="0" width="6.41" height="8.5" fill="#dcdcd8"/><rect x="45.11" y="8.5" width="6.41" height="9.5" fill="#d8d8d6"/><rect x="51.47" y="0" width="6.76" height="8.5" fill="#cec9c8"/><rect x="51.47" y="8.5" width="6.76" height="9.5" fill="#c9c5c2"/><rect x="58.17" y="0" width="6.41" height="8.5" fill="#d2d3d6"/><rect x="58.17" y="8.5" width="6.41" height="9.5" fill="#c4c6ca"/><rect x="64.53" y="0" width="7.02" height="8.5" fill="#d9dbda"/><rect x="64.53" y="8.5" width="7.02" height="9.5" fill="#d4d6d5"/><rect x="71.50" y="0" width="5.19" height="8.5" fill="#d9dbda"/><rect x="71.50" y="8.5" width="5.19" height="9.5" fill="#dcdde0"/><rect x="76.64" y="0" width="7.97" height="8.5" fill="#d9d4d3"/><rect x="76.64" y="8.5" width="7.97" height="9.5" fill="#d7d3d1"/><rect x="84.56" y="0" width="2.49" height="8.5" fill="#e4eaf3"/><rect x="84.56" y="8.5" width="2.49" height="9.5" fill="#dde9f0"/></svg>
<svg style="left:646px;top:540px" width="153" height="18" shape-rendering="crispEdges"><rect x="0" y="0" width="8" height="8.5" fill="#d4d3d1"/><rect x="8" y="0" width="12" height="8.5" fill="#dad8d8"/><rect x="20" y="0" width="9" height="8.5" fill="#e0e2e4"/><rect x="29" y="0" width="13" height="8.5" fill="#e5e5e3"/><rect x="42" y="0" width="11" height="8.5" fill="#ebebea"/><rect x="53" y="0" width="9" height="8.5" fill="#e4e2e2"/><rect x="62" y="0" width="12" height="8.5" fill="#d0d1d3"/><rect x="74" y="0" width="2" height="8.5" fill="#e0e2e3"/><rect x="76" y="0" width="9" height="8.5" fill="#eef0ef"/><rect x="85" y="0" width="2" height="8.5" fill="#e0e0e0"/><rect x="87" y="0" width="20" height="8.5" fill="#dad8d6"/><rect x="107" y="0" width="12" height="8.5" fill="#e1e2e3"/><rect x="119" y="0" width="11" height="8.5" fill="#e2e1df"/><rect x="130" y="0" width="11" height="8.5" fill="#cdd1d2"/><rect x="141" y="0" width="10" height="8.5" fill="#d9d6d4"/><rect x="151" y="0" width="2" height="8.5" fill="#d8dbe0"/><rect x="0" y="8.5" width="8" height="9.5" fill="#d3d3d1"/><rect x="8" y="8.5" width="12" height="9.5" fill="#d7d3d1"/><rect x="20" y="8.5" width="9" height="9.5" fill="#c8cacd"/><rect x="29" y="8.5" width="11" height="9.5" fill="#cecfca"/><rect x="40" y="8.5" width="2" height="9.5" fill="#d3d3d3"/><rect x="42" y="8.5" width="11" height="9.5" fill="#e1e4e8"/><rect x="53" y="8.5" width="9" height="9.5" fill="#ecebec"/><rect x="62" y="8.5" width="12" height="9.5" fill="#d6d7d8"/><rect x="74" y="8.5" width="2" height="9.5" fill="#e0e2e3"/><rect x="76" y="8.5" width="9" height="9.5" fill="#eff1f0"/><rect x="85" y="8.5" width="2" height="9.5" fill="#e0e0e0"/><rect x="87" y="8.5" width="20" height="9.5" fill="#d8d6d6"/><rect x="107" y="8.5" width="12" height="9.5" fill="#dcdddf"/><rect x="119" y="8.5" width="11" height="9.5" fill="#dfe0df"/><rect x="130" y="8.5" width="11" height="9.5" fill="#c9cacc"/><rect x="141" y="8.5" width="10" height="9.5" fill="#d6d3d0"/><rect x="151" y="8.5" width="2" height="9.5" fill="#d8dbe0"/></svg>
<svg style="left:831px;top:540px" width="100" height="18" shape-rendering="crispEdges"><rect x="0.00" y="0" width="6.16" height="8.5" fill="#d6d3ce"/><rect x="0.00" y="8.5" width="6.16" height="9.5" fill="#d5d4ce"/><rect x="6.11" y="0" width="7.96" height="8.5" fill="#d5d9da"/><rect x="6.11" y="8.5" width="7.96" height="9.5" fill="#c9cacb"/><rect x="14.01" y="0" width="8.26" height="8.5" fill="#c9cacc"/><rect x="14.01" y="8.5" width="8.26" height="9.5" fill="#d4d2ce"/><rect x="22.22" y="0" width="7.66" height="8.5" fill="#d8d4d2"/><rect x="22.22" y="8.5" width="7.66" height="9.5" fill="#cdc9c7"/><rect x="29.83" y="0" width="6.36" height="8.5" fill="#d0d3d3"/><rect x="29.83" y="8.5" width="6.36" height="9.5" fill="#cccfce"/><rect x="36.14" y="0" width="8.06" height="8.5" fill="#cfd1d3"/><rect x="36.14" y="8.5" width="8.06" height="9.5" fill="#cbcbce"/><rect x="44.14" y="0" width="7.76" height="8.5" fill="#d8dbdb"/><rect x="44.14" y="8.5" width="7.76" height="9.5" fill="#dcdedd"/><rect x="51.85" y="0" width="7.36" height="8.5" fill="#dcdcd8"/><rect x="51.85" y="8.5" width="7.36" height="9.5" fill="#d8d8d6"/><rect x="59.16" y="0" width="7.76" height="8.5" fill="#cec9c8"/><rect x="59.16" y="8.5" width="7.76" height="9.5" fill="#c9c5c2"/><rect x="66.87" y="0" width="7.36" height="8.5" fill="#d2d3d6"/><rect x="66.87" y="8.5" width="7.36" height="9.5" fill="#c4c6ca"/><rect x="74.17" y="0" width="8.06" height="8.5" fill="#d9dbda"/><rect x="74.17" y="8.5" width="8.06" height="9.5" fill="#d4d6d5"/><rect x="82.18" y="0" width="5.96" height="8.5" fill="#d9dbda"/><rect x="82.18" y="8.5" width="5.96" height="9.5" fill="#dcdde0"/><rect x="88.09" y="0" width="9.16" height="8.5" fill="#d9d4d3"/><rect x="88.09" y="8.5" width="9.16" height="9.5" fill="#d7d3d1"/><rect x="97.20" y="0" width="2.85" height="8.5" fill="#e4eaf3"/><rect x="97.20" y="8.5" width="2.85" height="9.5" fill="#dde9f0"/></svg>
<div class="t" style="left:960px;top:537px">device04</div>
<div class="t" style="left:1091px;top:537px">customer01 , customer02</div>
<div class="t" style="left:1340px;top:537px">大阪支店</div>
<div class="a" style="left:1440px;top:536px;width:29px;height:27px;background:#efefef;border-radius:4px"></div>
<svg style="left:1447px;top:540.5px" width="16" height="16"><circle cx="7.65" cy="7.75" r="7.45" fill="#333"/><rect x="5.9" y="4.4" width="4" height="1.3" fill="#fff"/><path d="M5 6.7 H9.9 V10.2 H10.9 V11.4 H5 V10.2 H7.2 V7.9 H5 Z" fill="#fff"/></svg>
<div class="a" style="left:1474px;top:536px;width:29px;height:27px;background:#efefef;border-radius:4px"></div>
<svg style="left:1480px;top:542px" width="16" height="12"><path d="M0.9 10.7 C1.8 8.8 3 7.8 5 7.8 H8.1 V10.9 L15.4 5.6 L8.1 0.1 V4 H5.5 C3 4 1.3 6.5 0.9 10.7 Z" fill="#333"/></svg>
<div class="t" style="left:323px;top:595px">現在の表示範囲： 1 - 4 / 4</div>
<div class="a" style="left:1359px;top:589px;width:165px;height:36px;border:1px solid #ddd;border-radius:4px;background:#fff"></div>
<div class="a" style="left:1393px;top:589px;width:1px;height:36px;background:#ddd"></div>
<div class="a" style="left:1424px;top:589px;width:35px;height:36px;background:#428bca"></div>
<div class="a" style="left:1488px;top:589px;width:1px;height:36px;background:#ddd"></div>
<div class="t" style="left:1372px;top:597px;color:#777">«</div>
<div class="t" style="left:1406px;top:597px;color:#777">‹</div>
<div class="t" style="left:1437px;top:597px;color:#fff">1</div>
<div class="t" style="left:1471px;top:597px;color:#777">›</div>
<div class="t" style="left:1502px;top:597px;color:#777">»</div>
</body></html>
